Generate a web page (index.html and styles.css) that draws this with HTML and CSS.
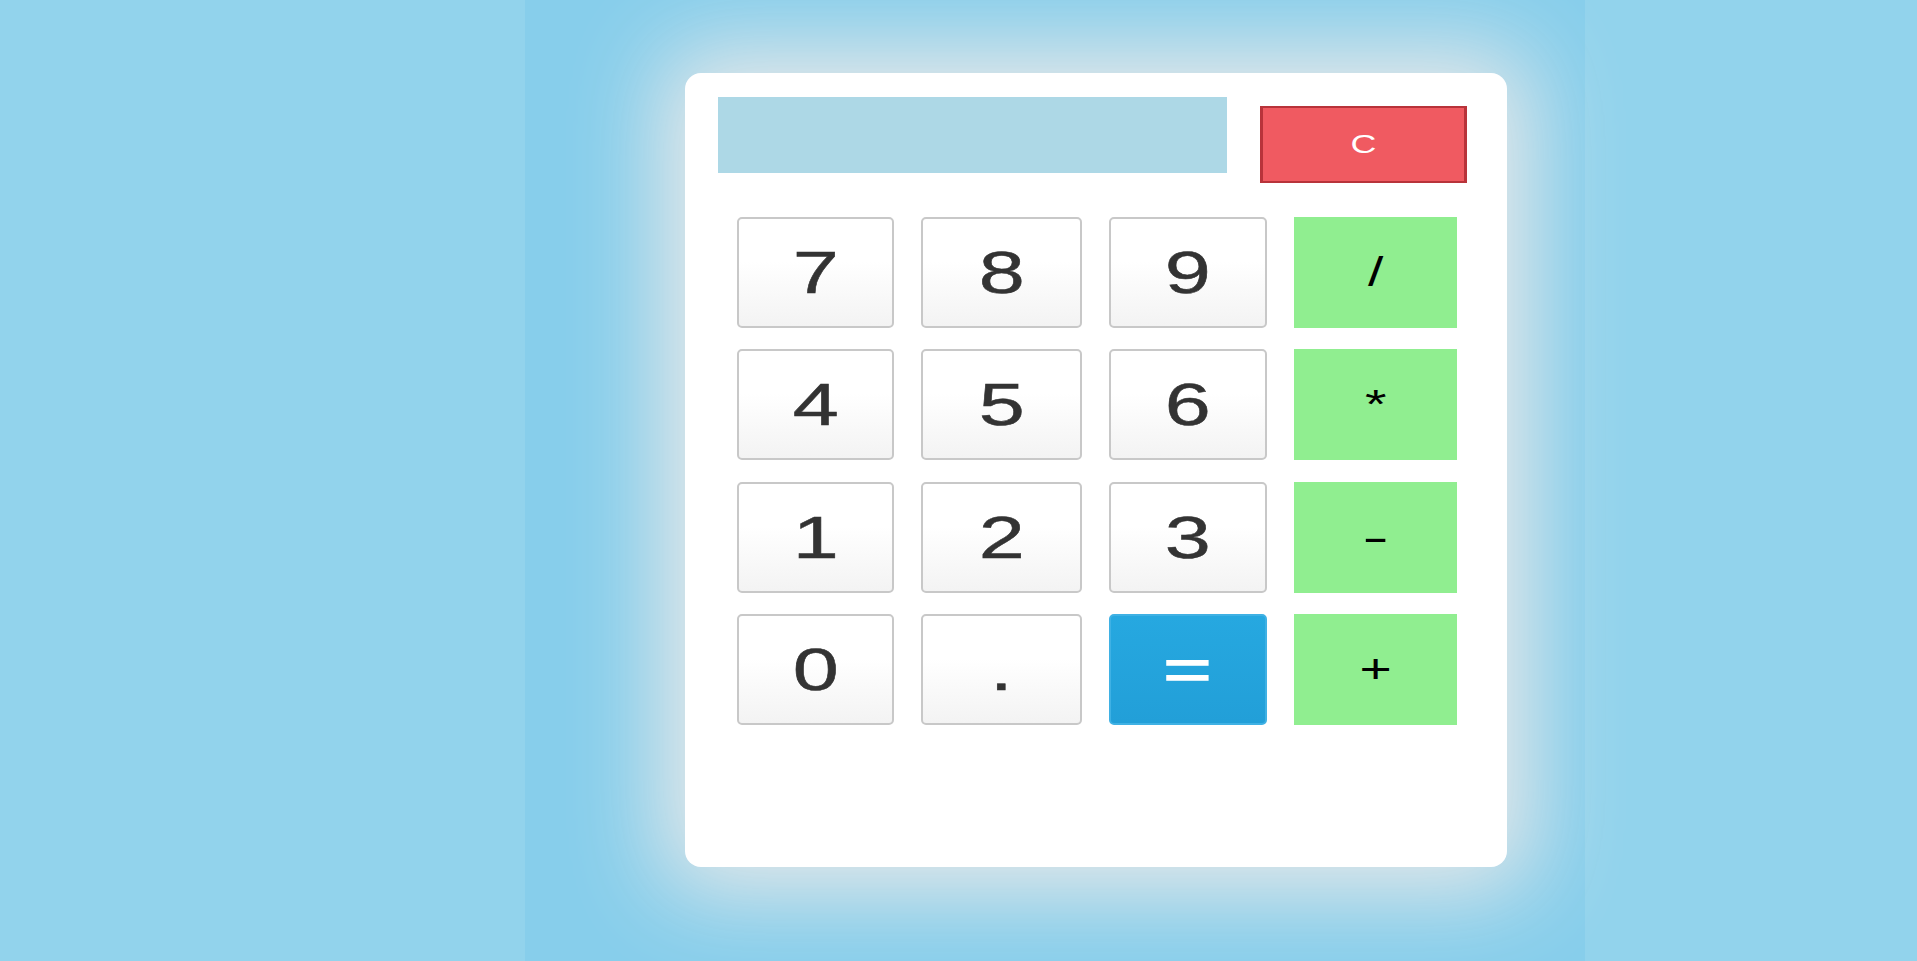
FILE: index.html
```html
<!DOCTYPE html>
<html lang="en">
<head>
<meta charset="utf-8">
<title>Calculator</title>
<link rel="stylesheet" href="styles.css">
</head>
<body>
<div class="page">
  <div class="calc">
    <div class="top">
      <div class="display"></div>
      <button class="btn-clear"><span class="lbl">C</span></button>
    </div>
    <div class="keys">
      <button class="key num"><span class="lbl">7</span></button>
      <button class="key num"><span class="lbl">8</span></button>
      <button class="key num"><span class="lbl">9</span></button>
      <button class="key op"><span class="lbl">/</span></button>
      <button class="key num"><span class="lbl">4</span></button>
      <button class="key num"><span class="lbl">5</span></button>
      <button class="key num"><span class="lbl">6</span></button>
      <button class="key op"><span class="lbl">*</span></button>
      <button class="key num"><span class="lbl">1</span></button>
      <button class="key num"><span class="lbl">2</span></button>
      <button class="key num"><span class="lbl">3</span></button>
      <button class="key op"><span class="lbl wide">-</span></button>
      <button class="key num"><span class="lbl">0</span></button>
      <button class="key num"><span class="lbl">.</span></button>
      <button class="key eq"><span class="lbl">=</span></button>
      <button class="key op"><span class="lbl">+</span></button>
    </div>
  </div>
</div>
</body>
</html>
```
FILE: styles.css
```css
html, body {
  margin: 0;
  padding: 0;
}
body {
  background: #92d3ec;
  font-family: "Liberation Sans", Arial, sans-serif;
  overflow: hidden;
}
.page {
  width: 1060px;
  height: 961px;
  margin-left: 525px;
  background: #87ceeb;
  padding-top: 73px;
  box-sizing: border-box;
}
.calc {
  width: 822px;
  height: 794px;
  margin-left: 160px;
  background: #ffffff;
  border-radius: 16px;
  box-shadow: 0 0 90px 25px #e9e9e9;
  box-sizing: border-box;
  padding: 24px 40px 0 33px;
}
.top {
  display: flex;
  align-items: flex-start;
  gap: 33px;
}
.display {
  width: 509px;
  height: 76px;
  background: #add8e6;
}
.btn-clear {
  margin-top: 9px;
  width: 207px;
  height: 77px;
  background: #f05a61;
  border-style: solid;
  border-color: #b8333a;
  border-width: 2px 3px;
  color: #ffffff;
  font-family: "Liberation Sans", Arial, sans-serif;
  font-size: 26px;
  padding: 0;
}
.lbl {
  display: inline-block;
  transform: scaleX(1.38);
}
.lbl.wide {
  transform: scaleX(2);
}
.keys {
  margin-top: 34px;
  margin-left: 19px;
  display: grid;
  grid-template-columns: 157px 161px 158px 163px;
  grid-auto-rows: 111px;
  column-gap: 27px;
  row-gap: 21.3px;
}
.key {
  padding: 0;
  margin: 0;
  font-family: "Liberation Sans", Arial, sans-serif;
}
.num {
  border: 2px solid #c8c8c8;
  border-radius: 5px;
  background: linear-gradient(#ffffff 0%, #ffffff 40%, #f3f3f3 100%);
  color: #333333;
  font-size: 60px;
  -webkit-text-stroke: 0.5px #333333;
}
.op {
  border: none;
  background: #90ee90;
  color: #000000;
  font-size: 40px;
}
.eq {
  border: 2px solid #3fb1e4;
  border-radius: 5px;
  background: linear-gradient(#26a8e0, #229fd8);
  color: #ffffff;
  font-size: 60px;
  -webkit-text-stroke: 1.5px #ffffff;
}
```
